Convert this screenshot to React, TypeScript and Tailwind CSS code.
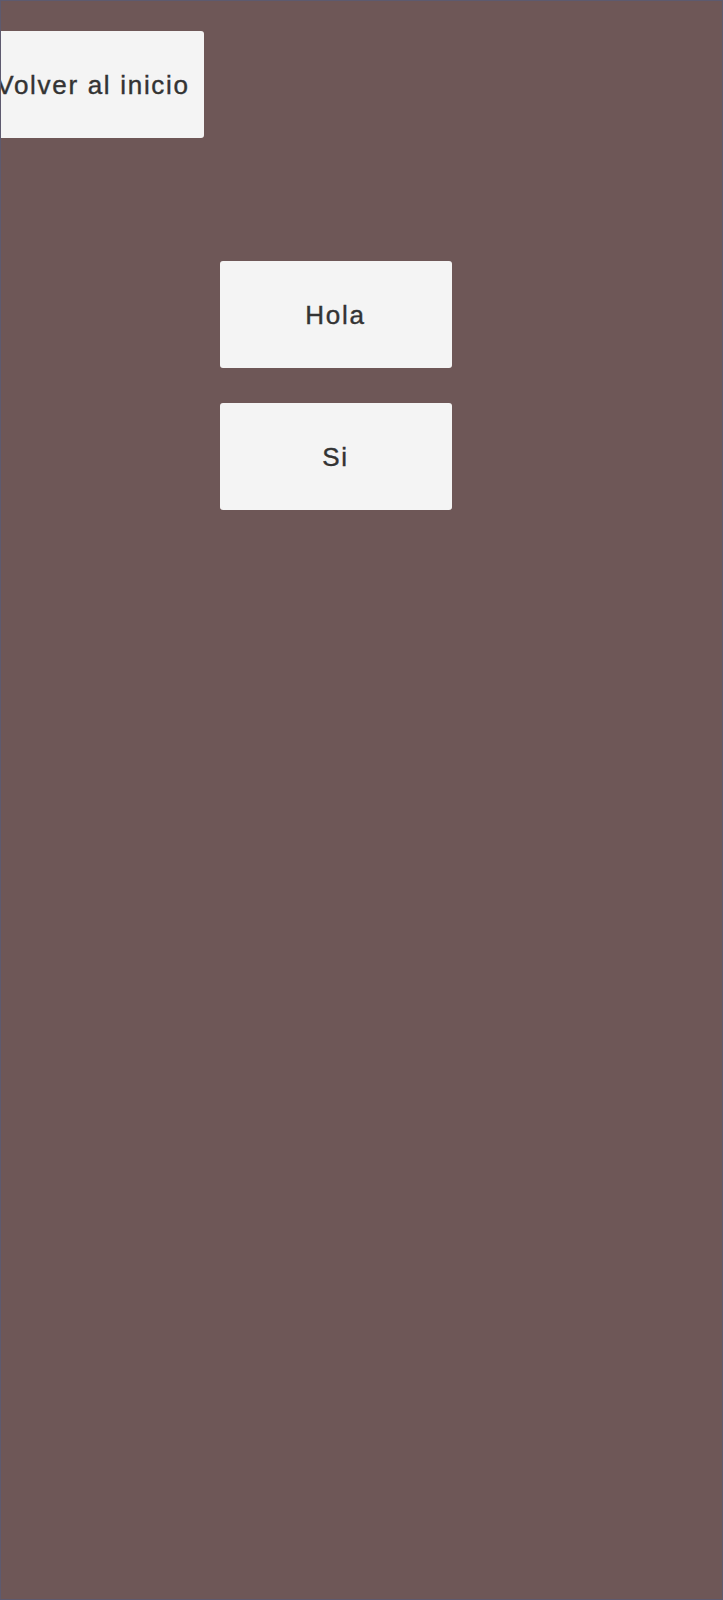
import React from "react";

export default function App() {
  const btn =
    "w-[232px] h-[107px] bg-[#f4f4f4] rounded-[3px] flex items-center justify-center pt-[2px] text-[26px] tracking-[1.7px] text-[#333333] [-webkit-text-stroke:0.4px_#333333]";
  return (
    <div
      className="min-h-screen h-[1600px] w-full bg-[#6e5757] border border-[#5d5a6f] overflow-hidden"
      style={{ fontFamily: '"Liberation Sans", Arial, sans-serif' }}
    >
      <div className="pt-[30px]">
        <button className={`${btn} -ml-[29px] pl-[10px]`}>Volver al inicio</button>
      </div>
      <div className="mt-[123px] flex flex-col items-center gap-[35px] pr-[52px]">
        <button className={btn}>Hola</button>
        <button className={btn}>Si</button>
      </div>
    </div>
  );
}
